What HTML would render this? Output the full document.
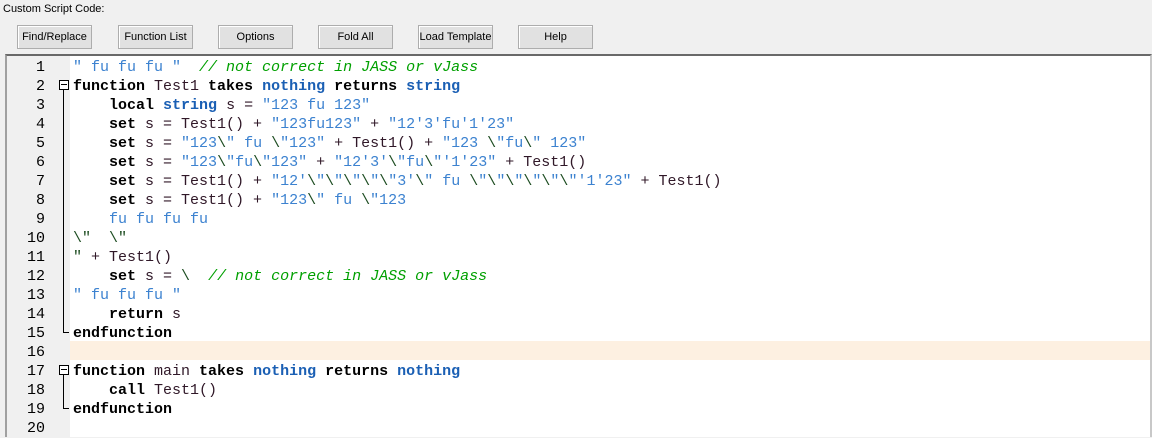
<!DOCTYPE html>
<html><head><meta charset="utf-8"><style>
body{margin:0;width:1152px;height:437px;background:#f0f0f0;position:relative;overflow:hidden;font-family:"Liberation Sans",sans-serif}
.lbl{position:absolute;left:3px;top:3px;font-size:11px;color:#000}
.btn{position:absolute;top:25px;height:24px;width:75px;box-sizing:border-box;border:1px solid #adadad;background:#e1e1e1;font-size:11px;text-align:center;line-height:22px;color:#000;box-shadow:inset 1px 1px 0 #fff}
.ed{position:absolute;left:5px;top:54px;width:1147px;height:383px;border-top:2px solid #696969;border-left:2px solid #a0a0a0;background:#fff;box-sizing:border-box;border-right:2px solid #c8c8c8}
.gut{position:absolute;left:0;top:0;width:63px;height:100%;background:#f0f0f0}
.code{position:absolute;left:66px;top:2px;font:15px/19px "Liberation Mono",monospace;color:#301828;white-space:pre}
.hl{position:absolute;left:63px;right:0;top:285px;height:19px;background:#fdf0e1}
b{color:#000}
.t{color:#1a5fb4;font-weight:bold}
.s{color:#3c82d0}
.c{color:#00a000;font-style:italic}
.e{color:#1c4c20}
.fold{position:absolute;left:52px;width:10px;height:10px;border:1px solid #000;background:#fff;box-sizing:border-box}
.fold:after{content:"";position:absolute;left:1px;top:3px;width:6px;height:1px;background:#000}
.vl{position:absolute;left:56px;width:1px;background:#000}
.end{position:absolute;left:56px;width:6px;height:1px;background:#000}
</style></head><body>
<div class="lbl">Custom Script Code:</div>
<div class="btn" style="left:17px">Find/Replace</div>
<div class="btn" style="left:118px">Function List</div>
<div class="btn" style="left:218px">Options</div>
<div class="btn" style="left:318px">Fold All</div>
<div class="btn" style="left:418px">Load Template</div>
<div class="btn" style="left:518px">Help</div>
<div class="ed">
<div class="gut"></div>
<div class="hl"></div>
<div class="code" style="left:0;width:38px;text-align:right;color:#000">1
2
3
4
5
6
7
8
9
10
11
12
13
14
15
16
17
18
19
20</div>
<div class="fold" style="top:24px"></div>
<div class="vl" style="top:34px;height:242px"></div>
<div class="end" style="top:276px"></div>
<div class="fold" style="top:309px"></div>
<div class="vl" style="top:319px;height:33px"></div>
<div class="end" style="top:352px"></div>
<div class="code"><span class="s">" fu fu fu "</span>  <span class="c">// not correct in JASS or vJass</span>
<b>function</b> Test1 <b>takes</b> <span class="t">nothing</span> <b>returns</b> <span class="t">string</span>
    <b>local</b> <span class="t">string</span> s = <span class="s">"123 fu 123"</span>
    <b>set</b> s = Test1() + <span class="s">"123fu123"</span> + <span class="s">"12'3'fu'1'23"</span>
    <b>set</b> s = <span class="s">"123<span class="e">\</span>" fu <span class="e">\</span>"123"</span> + Test1() + <span class="s">"123 <span class="e">\</span>"fu<span class="e">\</span>" 123"</span>
    <b>set</b> s = <span class="s">"123<span class="e">\</span>"fu<span class="e">\</span>"123"</span> + <span class="s">"12'3'<span class="e">\</span>"fu<span class="e">\</span>"'1'23"</span> + Test1()
    <b>set</b> s = Test1() + <span class="s">"12'<span class="e">\</span>"<span class="e">\</span>"<span class="e">\</span>"<span class="e">\</span>"<span class="e">\</span>"3'<span class="e">\</span>" fu <span class="e">\</span>"<span class="e">\</span>"<span class="e">\</span>"<span class="e">\</span>"<span class="e">\</span>"<span class="e">\</span>"'1'23"</span> + Test1()
    <b>set</b> s = Test1() + <span class="s">"123<span class="e">\</span>" fu <span class="e">\</span>"123</span>
    <span class="s">fu fu fu fu</span>
<span class="e">\"  \"</span>
<span class="e">"</span> + Test1()
    <b>set</b> s = <span class="e">\</span>  <span class="c">// not correct in JASS or vJass</span>
<span class="s">" fu fu fu "</span>
    <b>return</b> s
<b>endfunction</b>

<b>function</b> main <b>takes</b> <span class="t">nothing</span> <b>returns</b> <span class="t">nothing</span>
    <b>call</b> Test1()
<b>endfunction</b>
</div>
</div>
</body></html>
